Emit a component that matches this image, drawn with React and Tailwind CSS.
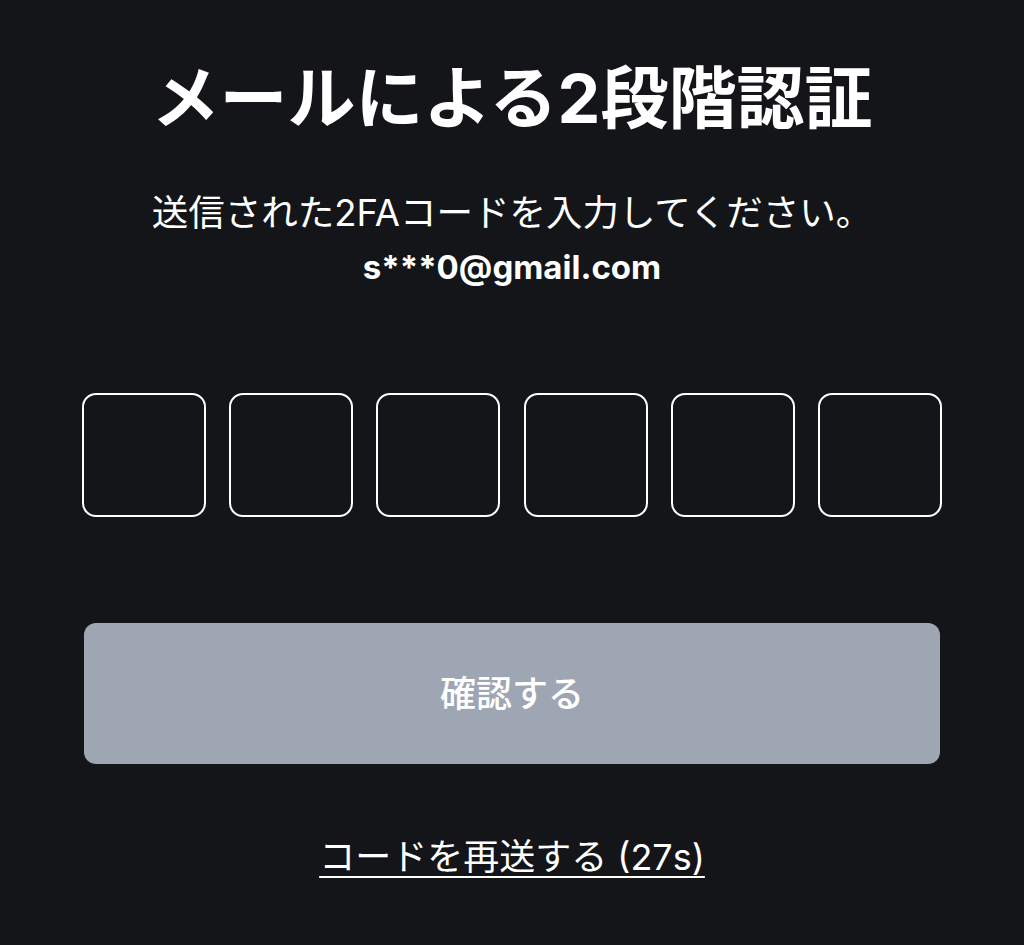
export default function App() {
  const boxes = [0, 1, 2, 3, 4, 5];
  return (
    <div
      className="w-[1024px] h-[945px] bg-[#141518] text-white flex flex-col items-center overflow-hidden"
      style={{ fontFamily: 'Inter, "Noto Sans CJK JP", sans-serif' }}
    >
      <h1 className="mt-[53px] text-[68px] leading-[90px] font-bold">
        メールによる2段階認証
      </h1>
      <p className="mt-[45px] text-[36.5px] leading-[50px] text-white">
        送信された2FAコードを入力してください。
      </p>
      <p className="mt-[7px] text-[33px] leading-[44px] font-bold">s***0@gmail.com</p>

      <div className="mt-[104px] w-full px-[82px] flex justify-between">
        {boxes.map((i) => (
          <div
            key={i}
            className="w-[124px] h-[124px] rounded-[14px] border-2 border-white bg-[#141518]"
          />
        ))}
      </div>

      <button className="mt-[106px] w-[856px] h-[141px] rounded-[12px] bg-[#9ea6b3] text-white text-[36px] font-medium">
        確認する
      </button>

      <a className="mt-[69px] text-[36px] leading-[48px] underline underline-offset-[6px] decoration-2 text-white">
        コードを再送する (27s)
      </a>
    </div>
  );
}
